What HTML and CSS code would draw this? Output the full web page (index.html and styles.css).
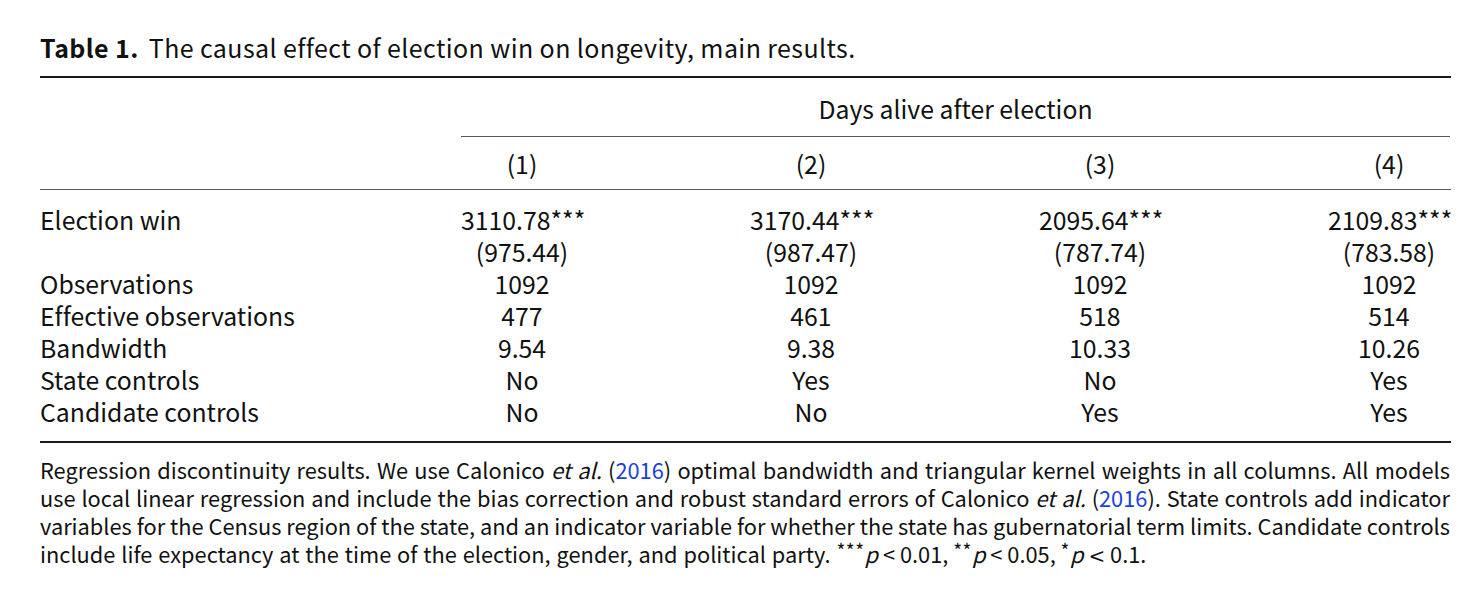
FILE: index.html
```html
<!DOCTYPE html>
<html lang="en">
<head>
<meta charset="utf-8">
<title>Table 1</title>
<link rel="stylesheet" href="styles.css">
</head>
<body>
<div class="page">
  <div class="caption"><span class="label">Table 1.</span>The causal effect of election win on longevity, main results.</div>
  <div class="rule thick"></div>
  <div class="grid head1">
    <div class="span">Days alive after election</div>
  </div>
  <div class="grid head2">
    <div></div><div class="c">(1)</div><div class="c">(2)</div><div class="c">(3)</div><div class="c">(4)</div>
  </div>
  <div class="rule thin"></div>
  <div class="grid body">
    <div>Election win</div><div class="c">3110.78***</div><div class="c">3170.44***</div><div class="c">2095.64***</div><div class="c">2109.83***</div>
    <div></div><div class="c">(975.44)</div><div class="c">(987.47)</div><div class="c">(787.74)</div><div class="c">(783.58)</div>
    <div>Observations</div><div class="c">1092</div><div class="c">1092</div><div class="c">1092</div><div class="c">1092</div>
    <div>Effective observations</div><div class="c">477</div><div class="c">461</div><div class="c">518</div><div class="c">514</div>
    <div>Bandwidth</div><div class="c">9.54</div><div class="c">9.38</div><div class="c">10.33</div><div class="c">10.26</div>
    <div>State controls</div><div class="c">No</div><div class="c">Yes</div><div class="c">No</div><div class="c">Yes</div>
    <div>Candidate controls</div><div class="c">No</div><div class="c">No</div><div class="c">Yes</div><div class="c">Yes</div>
  </div>
  <div class="rule thick"></div>
  <p class="notes"><span class="ln just">Regression discontinuity results. We use Calonico <i>et al.</i> (<a href="#">2016</a>) optimal bandwidth and triangular kernel weights in all columns. All models</span><span class="ln just">use local linear regression and include the bias correction and robust standard errors of Calonico <i>et al.</i> (<a href="#">2016</a>). State controls add indicator</span><span class="ln just">variables for the Census region of the state, and an indicator variable for whether the state has gubernatorial term limits. Candidate controls</span><span class="ln last">include life expectancy at the time of the election, gender, and political party. <span class="sig"><sup>***</sup><i>p</i> &lt; 0.01, <sup>**</sup><i>p</i> &lt; 0.05, <sup>*</sup><i>p</i> <span class="lt">&lt;</span> 0.1.</span></span></p>
</div>
</body>
</html>
```
FILE: styles.css
```css
html, body {
  margin: 0;
  padding: 0;
  background: #ffffff;
}
body {
  font-family: "Noto Sans CJK SC", "Noto Sans", sans-serif;
  color: #111111;
  font-variant-ligatures: none;
}
.page {
  width: 1411px;
  padding: 31px 0 0 40px;
}
.caption {
  font-size: 25px;
  letter-spacing: 0.4px;
  line-height: 32px;
  margin-bottom: 13px;
}
.caption .label {
  font-weight: 700;
  margin-right: 10px;
}
.rule {
  width: 100%;
}
.rule.thick {
  height: 2px;
  background: #1a1a1a;
}
.rule.thin {
  height: 1px;
  background: #5a5a5a;
}
.grid {
  display: grid;
  grid-template-columns: 254px repeat(4, 122px);
  column-gap: 167px;
  font-size: 24.8px;
  line-height: 32px;
}
.grid > div {
  white-space: nowrap;
}
.grid .c {
  text-align: center;
}
.head1 {
  padding-top: 14px;
}
.head1 .span {
  grid-column: 2 / 6;
  text-align: center;
  padding-bottom: 12px;
  border-bottom: 1px solid #5a5a5a;
}
.head2 {
  padding: 10px 0 10px;
}
.body {
  padding: 13px 0 14px;
}
.notes {
  margin: 13px 0 0;
  width: 1410px;
  font-size: 21.8px;
  line-height: 28px;
  color: #111111;
}
.notes .ln {
  display: block;
  white-space: nowrap;
}
.notes .just {
  white-space: normal;
  text-align: justify;
  text-align-last: justify;
  word-spacing: -0.5px;
}
.notes .last {
  word-spacing: 1px;
}
.notes .sig {
  word-spacing: 0;
}
.notes a {
  color: #1a3fe0;
  text-decoration: none;
}
.notes sup {
  font-size: 19px;
  line-height: 0;
  vertical-align: 5px;
  letter-spacing: 0.5px;
}
.notes .lt {
  font-family: "DejaVu Serif", serif;
  font-size: 20px;
}
```
